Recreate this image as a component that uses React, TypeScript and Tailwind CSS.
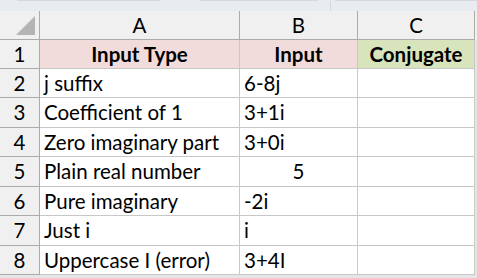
import React from "react";

const ROWS = [
  { n: 1, a: "Input Type", b: "Input", c: "Conjugate", head: true, h: "h-[29px]" },
  { n: 2, a: "j suffix", b: "6-8j", c: "", h: "h-[29px]" },
  { n: 3, a: "Coefficient of 1", b: "3+1i", c: "", h: "h-[30px]" },
  { n: 4, a: "Zero imaginary part", b: "3+0i", c: "", h: "h-[29px]" },
  { n: 5, a: "Plain real number", b: "5", c: "", h: "h-[30px]", num: true },
  { n: 6, a: "Pure imaginary", b: "-2i", c: "", h: "h-[29px]" },
  { n: 7, a: "Just i", b: "i", c: "", h: "h-[30px]" },
  { n: 8, a: "Uppercase I (error)", b: "3+4I", c: "", h: "h-[29px]" },
];

export default function App() {
  return (
    <div className="w-[477px] h-[278px] overflow-hidden bg-[#e6e6e6] font-['Lato',sans-serif] text-[20.5px] text-black leading-none">
      {/* formula bar remnant */}
      <div className="h-[11px] bg-[#e8ecf0] flex">
        <div className="ml-[17px] w-[143px] h-px bg-[#d6d9dd]" />
        <div className="ml-[40px] w-[118px] h-px bg-[#d6d9dd]" />
        <div className="ml-[12px] w-px h-[11px] bg-[#d6d9dd]" />
        <div className="ml-[4px] flex-1 h-px bg-[#d6d9dd]" />
      </div>

      {/* column headers */}
      <div className="flex h-[29px] bg-[#f0f0f0]">
        <div className="w-[40px] border-r border-b border-[#ababab] relative">
          <div className="absolute right-[4px] bottom-[4px] w-0 h-0 border-l-[19px] border-l-transparent border-b-[19px] border-b-[#b4b4b4]" />
        </div>
        <div className="w-[200px] border-r border-b border-[#ababab] flex items-center justify-center">A</div>
        <div className="w-[118px] border-r border-b border-[#ababab] flex items-center justify-center">B</div>
        <div className="w-[117px] border-r border-b border-[#ababab] flex items-center justify-center">C</div>
      </div>

      {ROWS.map((r) => (
        <div key={r.n} className={`flex ${r.h}`}>
          <div className="w-[40px] bg-[#f0f0f0] border-r border-b border-[#ababab] flex items-center justify-center">
            {r.n}
          </div>
          <div
            className={`w-[200px] border-r border-b border-[#c8c8c8] flex items-center ${
              r.head ? "bg-[#f2dcdb] justify-center font-bold" : "bg-white pl-[4px]"
            }`}
          >
            {r.a}
          </div>
          <div
            className={`w-[118px] border-r border-b border-[#c8c8c8] flex items-center ${
              r.head
                ? "bg-[#f2dcdb] justify-center font-bold"
                : r.num
                ? "bg-white justify-center"
                : "bg-white pl-[4px]"
            }`}
          >
            {r.b}
          </div>
          <div
            className={`w-[117px] border-r border-b border-[#c8c8c8] flex items-center ${
              r.head ? "bg-[#d8e4bc] justify-center font-bold" : "bg-white"
            }`}
          >
            {r.c}
          </div>
        </div>
      ))}
    </div>
  );
}
